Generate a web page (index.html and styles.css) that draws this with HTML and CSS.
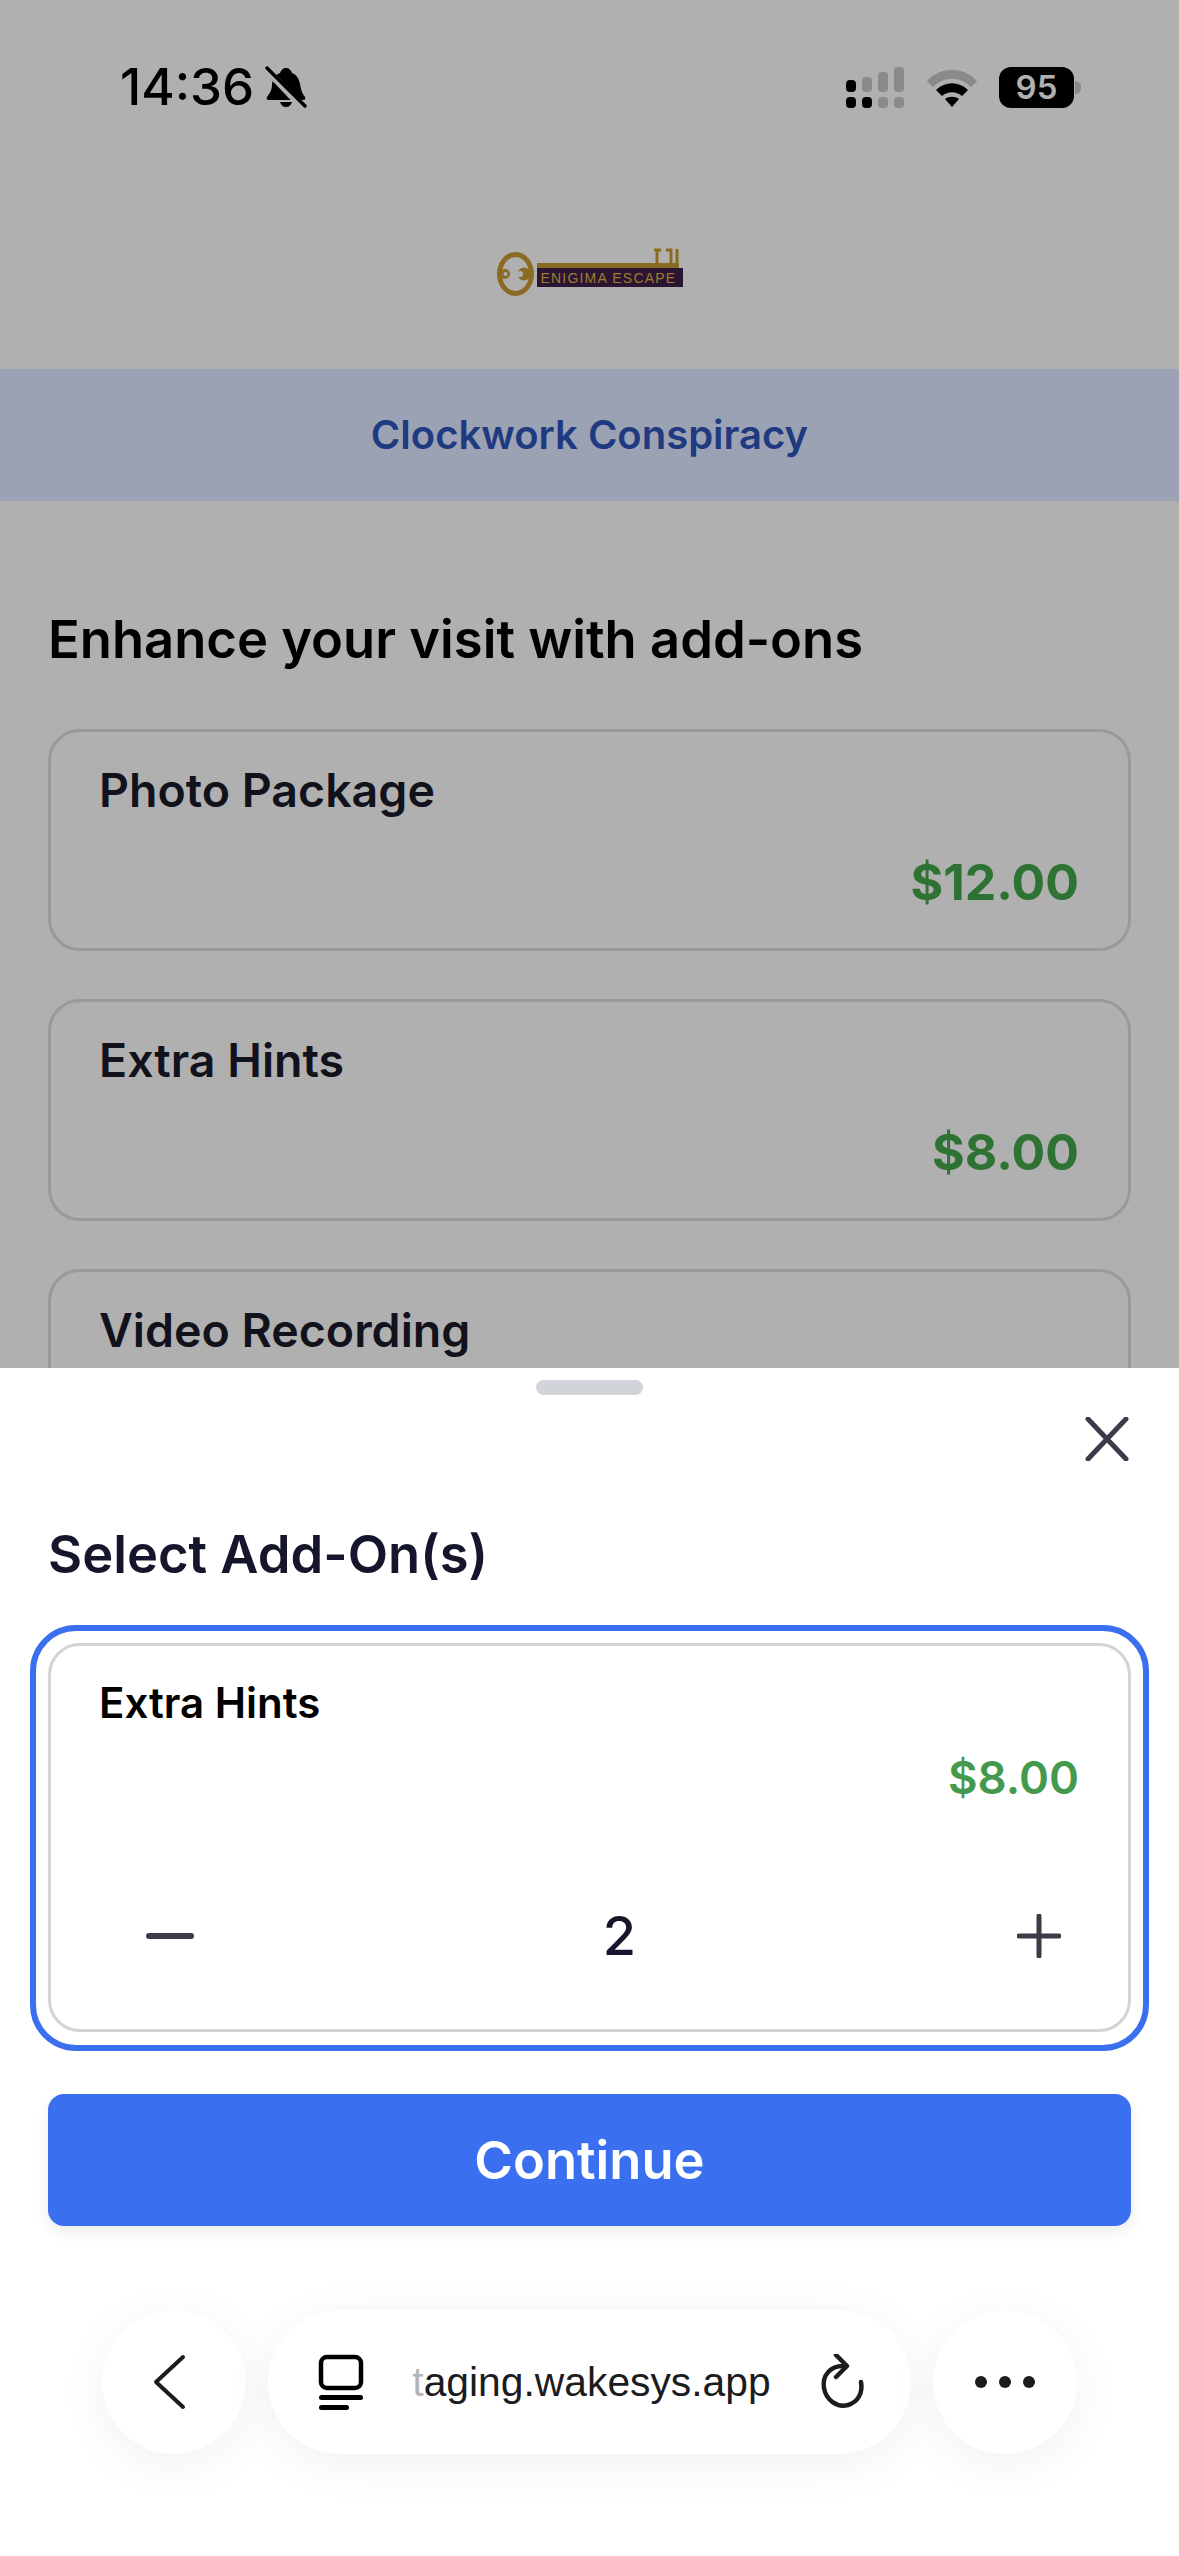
FILE: index.html
```html
<!DOCTYPE html>
<html lang="en">
<head>
<meta charset="UTF-8">
<meta name="viewport" content="width=device-width, initial-scale=1.0">
<title>Select Add-Ons</title>
<link rel="stylesheet" href="styles.css">
</head>
<body>
  <div class="screen">
    <div class="page">
      <div class="status-bar">
        <div class="status-left">
          <span class="clock">14:36</span>
          <svg class="bell" viewBox="0 0 44 44" width="44" height="44">
            <path d="M22 3c3 0 5 2 6 5 5 2 7 6 8 11 1 6 2 9 5 13 1 2 0 3-2 3H5c-2 0-3-1-2-3 3-4 5-7 5-13 1-5 3-9 8-11 1-3 3-5 6-5z" fill="#000"/>
            <path d="M16 37h12c-1 3-3 5-6 5s-5-2-6-5z" fill="#000"/>
            <path d="M2 4l38 40" stroke="#b0b0b0" stroke-width="7"/>
            <path d="M3 3l38 38" stroke="#000" stroke-width="3.5" stroke-linecap="round"/>
          </svg>
        </div>
        <div class="status-right">
          <svg class="signal" viewBox="0 0 59 41" width="59" height="41">
            <rect x="0" y="13" width="10" height="12" rx="4" fill="#000"/>
            <rect x="16" y="10" width="10" height="15" rx="4" fill="#8a8a8a"/>
            <rect x="32" y="5" width="10" height="20" rx="4" fill="#8a8a8a"/>
            <rect x="48" y="0" width="10" height="25" rx="4" fill="#8a8a8a"/>
            <rect x="0" y="30" width="10" height="11" rx="4" fill="#000"/>
            <rect x="16" y="30" width="10" height="11" rx="4" fill="#000"/>
            <rect x="32" y="30" width="10" height="11" rx="4" fill="#8a8a8a"/>
            <rect x="48" y="30" width="10" height="11" rx="4" fill="#8a8a8a"/>
          </svg>
          <svg class="wifi" viewBox="0 0 50 38" width="50" height="38">
            <path d="M0 12C14 -3 36 -3 50 12l-6 6C33 7 17 7 6 18z" fill="#8a8a8a"/>
            <path d="M9 21c9-9 23-9 32 0l-6 6c-6-5-14-5-20 0z" fill="#000"/>
            <path d="M18 30c4-3 10-3 14 0l-7 8z" fill="#000"/>
          </svg>
          <div class="battery">
            <span class="battery-level">95</span>
            <span class="battery-cap"></span>
          </div>
        </div>
      </div>

      <div class="logo-row">
        <svg class="logo" viewBox="0 0 188 50" width="188" height="50">
          <ellipse cx="19.5" cy="27" rx="16" ry="19.5" fill="none" stroke="#8b6a23" stroke-width="5"/>
          <circle cx="9" cy="27" r="5" fill="#8b6a23"/>
          <circle cx="9.5" cy="27" r="2" fill="#b0b0b0"/>
          <circle cx="28" cy="27" r="6.5" fill="#8b6a23"/>
          <circle cx="24" cy="27" r="3" fill="#b0b0b0"/>
          <rect x="41" y="16" width="142" height="5" fill="#8b6a23"/>
          <path d="M158 3h7M161 3v13M170 3h5v13M181 2v14" fill="none" stroke="#8b6a23" stroke-width="3"/>
          <rect x="41" y="21" width="146" height="19" fill="#2a1533"/>
          <text x="44.5" y="36" class="logo-text">ENIGIMA ESCAPE</text>
        </svg>
      </div>

      <div class="banner">Clockwork Conspiracy</div>

      <div class="addons">
        <h1 class="addons-title">Enhance your visit with add-ons</h1>
        <div class="addon-card">
          <div class="addon-name">Photo Package</div>
          <div class="addon-price">$12.00</div>
        </div>
        <div class="addon-card">
          <div class="addon-name">Extra Hints</div>
          <div class="addon-price">$8.00</div>
        </div>
        <div class="addon-card">
          <div class="addon-name">Video Recording</div>
        </div>
      </div>
    </div>

    <div class="sheet">
      <div class="sheet-handle"></div>
      <div class="sheet-close">
        <svg viewBox="0 0 44 44" width="44" height="44">
          <path d="M3 2l38 40M41 2L3 42" stroke="#3b3c4a" stroke-width="5" stroke-linecap="round"/>
        </svg>
      </div>
      <h2 class="sheet-title">Select Add-On(s)</h2>

      <div class="selected-outline">
        <div class="selected-card">
          <div class="selected-name">Extra Hints</div>
          <div class="selected-price">$8.00</div>
          <div class="stepper">
            <svg viewBox="0 0 48 48" width="48" height="48">
              <path d="M3 24h42" stroke="#3b3c4a" stroke-width="6" stroke-linecap="round"/>
            </svg>
            <span class="stepper-value">2</span>
            <svg viewBox="0 0 44 44" width="44" height="44">
              <path d="M2 22h40M22 2v40" stroke="#3b3c4a" stroke-width="5" stroke-linecap="round"/>
            </svg>
          </div>
        </div>
      </div>

      <button class="continue-btn" type="button">Continue</button>

      <div class="browser-bar">
        <div class="browser-round browser-back">
          <svg viewBox="0 0 34 56" width="34" height="56">
            <path d="M31 3L4 28l27 25" fill="none" stroke="#1c1c1e" stroke-width="4" stroke-linecap="round" stroke-linejoin="round"/>
          </svg>
        </div>
        <div class="browser-url">
          <svg viewBox="0 0 46 56" width="46" height="56">
            <rect x="3" y="3" width="40" height="31" rx="6" fill="none" stroke="#000" stroke-width="4.5"/>
            <rect x="1" y="41" width="44" height="5" rx="2.5" fill="#000"/>
            <rect x="1" y="51" width="30" height="5" rx="2.5" fill="#000"/>
          </svg>
          <span class="url-text"><span class="url-fade">t</span>aging.wakesys.app</span>
          <svg viewBox="0 0 46 56" width="46" height="56">
            <path d="M26 12C11 11 3 22 5 34c2 12 13 20 24 17 10-3 15-12 13-23" fill="none" stroke="#1c1c1e" stroke-width="4.5" stroke-linecap="round"/>
            <path d="M17 1l11 11-11 11" fill="none" stroke="#1c1c1e" stroke-width="4.5" stroke-linecap="round" stroke-linejoin="round"/>
          </svg>
        </div>
        <div class="browser-round">
          <svg viewBox="0 0 62 16" width="62" height="16">
            <circle cx="7" cy="8" r="6" fill="#1c1c1e"/>
            <circle cx="31" cy="8" r="6" fill="#1c1c1e"/>
            <circle cx="55" cy="8" r="6" fill="#1c1c1e"/>
          </svg>
        </div>
      </div>
    </div>
  </div>
</body>
</html>
```

FILE: styles.css
```css
* {
  box-sizing: border-box;
}

body {
  margin: 0;
  padding: 0;
  font-family: Inter, "Liberation Sans", sans-serif;
  background-color: #fff;
}

.screen {
  width: 1179px;
  height: 2556px;
  display: flex;
  flex-direction: column;
  overflow: hidden;
}

/* dimmed page behind the sheet */
.page {
  height: 1368px;
  flex-shrink: 0;
  overflow: hidden;
  background-color: #b0b0b0;
}

.status-bar {
  height: 180px;
  padding: 61px 98px 0 120px;
  display: flex;
  justify-content: space-between;
  align-items: flex-start;
}

.status-left {
  display: flex;
  align-items: center;
  gap: 10px;
}

.clock {
  font-size: 51px;
  font-weight: 500;
  line-height: 52px;
  color: #000;
}

.status-right {
  display: flex;
  align-items: center;
  gap: 22px;
  height: 53px;
}

.battery {
  display: flex;
  align-items: center;
  gap: 1px;
}

.battery-level {
  width: 75px;
  height: 41px;
  border-radius: 12px;
  background-color: #000;
  color: #b0b0b0;
  font-size: 33px;
  font-weight: 600;
  line-height: 41px;
  text-align: center;
}

.battery-cap {
  width: 6px;
  height: 13px;
  border-radius: 0 7px 7px 0;
  background-color: #8a8a8a;
}

.logo-row {
  height: 189px;
  display: flex;
  justify-content: center;
  align-items: flex-start;
  padding-top: 67px;
}

.logo-text {
  font-family: "Liberation Sans", sans-serif;
  font-size: 14px;
  letter-spacing: 1.2px;
  fill: #a07c2c;
}

.banner {
  height: 132px;
  background-color: #9aa2b3;
  color: #1f3a80;
  font-size: 40px;
  font-weight: 600;
  line-height: 132px;
  text-align: center;
}

.addons {
  padding: 108px 48px 0;
}

.addons-title {
  margin: 0 0 60px;
  font-size: 52.5px;
  font-weight: 600;
  line-height: 60px;
  color: #000;
}

.addon-card {
  height: 222px;
  margin-bottom: 48px;
  padding: 30px 49px 0 48px;
  border: 3px solid #999;
  border-radius: 32px;
}

.addon-name {
  font-size: 46.5px;
  font-weight: 600;
  line-height: 56px;
  color: #12121c;
}

.addon-price {
  margin-top: 34px;
  font-size: 50px;
  font-weight: 700;
  line-height: 60px;
  color: #2f7334;
  text-align: right;
}

.sheet {
  flex: 1;
  padding: 0 48px;
  background-color: #fff;
}

.sheet-handle {
  width: 107px;
  height: 15px;
  margin: 12px auto 0;
  border-radius: 8px;
  background-color: #d1d4d8;
}

.sheet-close {
  margin: 22px 2px 0 0;
  height: 44px;
  display: flex;
  justify-content: flex-end;
}

.sheet-title {
  margin: 61px 0 0;
  font-size: 52.5px;
  font-weight: 600;
  line-height: 64px;
  color: #15162b;
}

.selected-outline {
  margin: 39px -18px 0;
  padding: 12px 12px 13px;
  height: 426px;
  border: 6px solid #3a6ff0;
  border-radius: 46px;
}

.selected-card {
  height: 100%;
  padding: 33px 49px 0 48px;
  border: 3px solid #d3d3d3;
  border-radius: 32px;
}

.selected-name {
  font-size: 42px;
  font-weight: 600;
  line-height: 48px;
  color: #000;
}

.selected-price {
  margin-top: 24px;
  font-size: 45.5px;
  font-weight: 600;
  line-height: 54px;
  color: #44994d;
  text-align: right;
}

.stepper {
  margin-top: 101px;
  padding: 0 18px 0 47px;
  display: flex;
  justify-content: space-between;
  align-items: center;
}

.stepper-value {
  margin-left: 28px;
  font-size: 54px;
  font-weight: 500;
  line-height: 60px;
  color: #15162b;
}

.continue-btn {
  display: block;
  width: 100%;
  height: 132px;
  margin-top: 43px;
  border: none;
  border-radius: 16px;
  background-color: #3a6ff0;
  color: #fff;
  font-family: inherit;
  font-size: 52.5px;
  font-weight: 600;
  box-shadow: 0 6px 14px rgba(0, 0, 0, 0.08);
}

.browser-bar {
  margin-top: 84px;
  padding: 0 54px;
  display: flex;
  align-items: center;
  gap: 22px;
}

.browser-round {
  width: 144px;
  height: 144px;
  flex-shrink: 0;
  display: flex;
  justify-content: center;
  align-items: center;
  border-radius: 50%;
  background-color: #fff;
  box-shadow: 0 10px 50px rgba(0, 0, 0, 0.06);
}

.browser-back {
  padding-right: 10px;
}

.browser-url {
  flex: 1;
  height: 144px;
  padding: 0 46px 0 50px;
  display: flex;
  justify-content: space-between;
  align-items: center;
  border-radius: 72px;
  background-color: #fff;
  box-shadow: 0 10px 50px rgba(0, 0, 0, 0.06);
}

.url-text {
  font-family: "Liberation Sans", sans-serif;
  font-size: 40.8px;
  color: #1c1c1e;
}

.url-fade {
  color: #b5b5b5;
}
```
